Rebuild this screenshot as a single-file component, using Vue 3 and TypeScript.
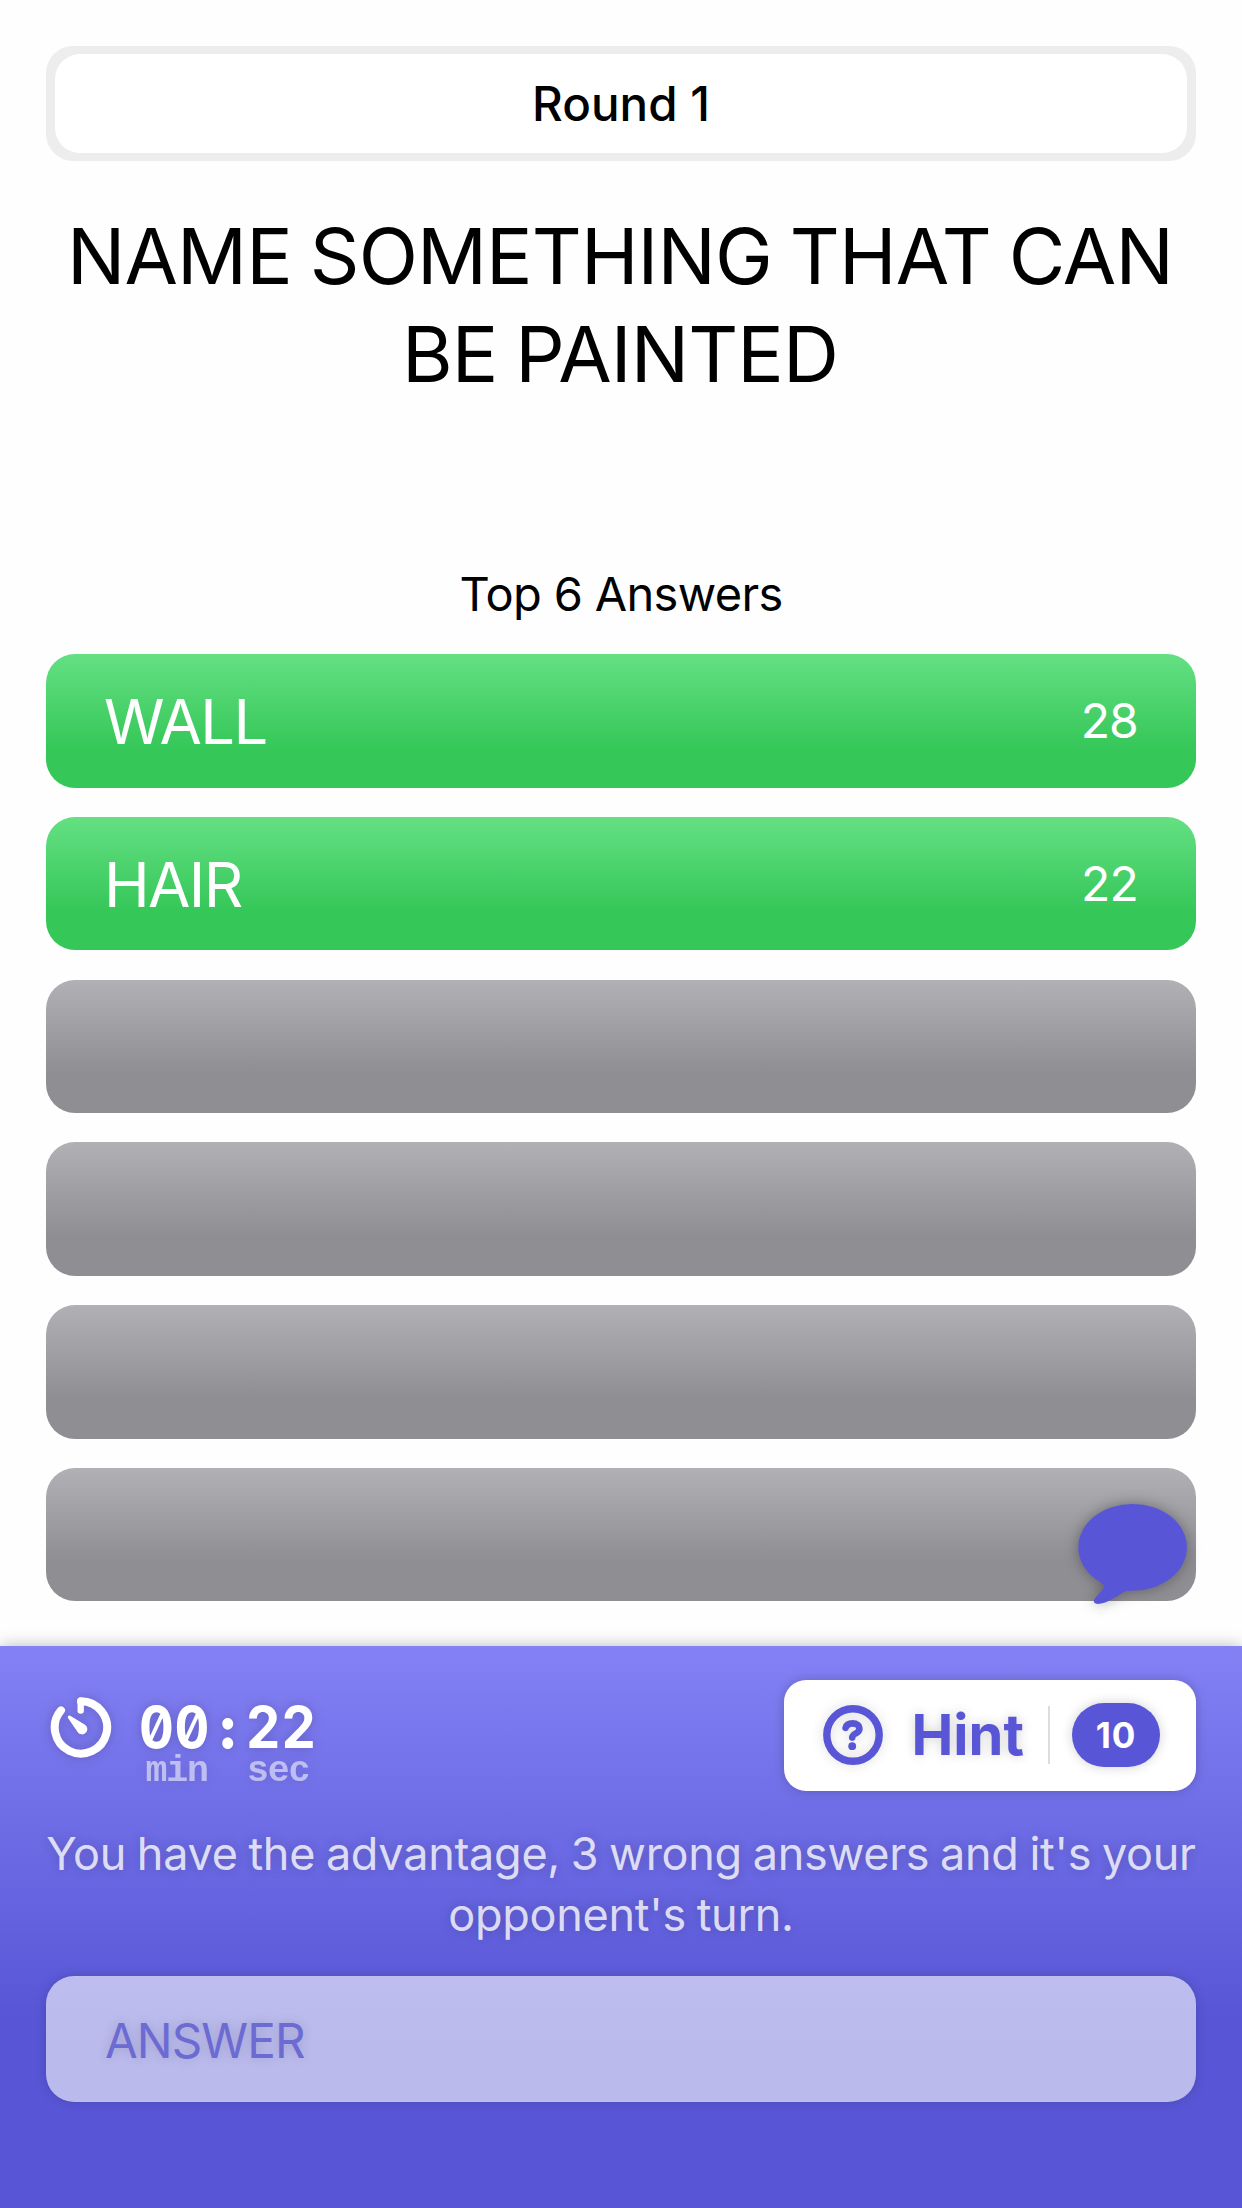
<script setup lang="ts">
interface Answer {
  text: string
  points: number | null
}

const answers: Answer[] = [
  { text: 'WALL', points: 28 },
  { text: 'HAIR', points: 22 },
  { text: '', points: null },
  { text: '', points: null },
  { text: '', points: null },
  { text: '', points: null },
]
</script>

<template>
  <div class="screen">
    <header class="round"><div class="round-inner">Round 1</div></header>
    <h1 class="question">NAME SOMETHING THAT CAN<br />BE PAINTED</h1>
    <h2 class="subtitle">Top 6 Answers</h2>
    <ul class="answers">
      <li v-for="(a, i) in answers" :key="i" class="answer" :class="{ open: a.points !== null }">
        <span class="answer-text">{{ a.text }}</span>
        <span class="points">{{ a.points }}</span>
      </li>
    </ul>

    <svg class="chat" viewBox="0 0 130 130" fill="#5856d6">
      <ellipse cx="62.6" cy="57.3" rx="54.3" ry="43.4" />
      <path d="M30 92C34.4 94.8 34.8 96.8 32.6 99.4L24.6 108.8C22.8 111.6 24.4 114 28 114C36 113.6 46 107.4 53 102.6C55.4 100.9 57.4 100.7 62 100.7L44 78Z" />
    </svg>

    <section class="panel">
      <div class="controls">
        <div class="timer">
          <svg class="timer-icon" viewBox="0 0 62 62" fill="none" stroke="#fff" stroke-linecap="round" stroke-linejoin="round">
            <path d="M31 4.2A26.2 26.2 0 1 1 11 13.4" stroke-width="8" />
            <path d="M30.7 13.6V3.6" stroke-width="6.4" />
            <path d="M20.2 18.7L35 27.7A5.3 5.3 0 1 1 27.6 35L18 20.9A1.6 1.6 0 0 1 20.2 18.7Z" fill="#fff" stroke="none" />
          </svg>
          <div class="clock">
            <div class="time">00<span class="colon">:</span>22</div>
            <div class="units"><span>min</span><span>sec</span></div>
          </div>
        </div>
        <button class="hint" type="button">
          <svg class="hint-icon" viewBox="0 0 60 60" fill="none" stroke="#5856d6" stroke-linecap="round">
            <circle cx="30" cy="30" r="26.2" stroke-width="7.4" />
            <path d="M22.6 22.8C23.5 19.6 26.2 18.4 29.6 18.4C33.6 18.4 36.4 20.6 36.4 24C36.4 28.6 29.2 28.4 29.2 32.6" stroke-width="6.6" />
            <circle cx="29.2" cy="41.2" r="3.9" fill="#5856d6" stroke="none" />
          </svg>
          <span class="hint-label">Hint</span>
          <span class="divider"></span>
          <span class="cost">10</span>
        </button>
      </div>
      <p class="message">You have the advantage, 3 wrong answers and it's your<br />opponent's turn.</p>
      <div class="field"><span>ANSWER</span></div>
    </section>
  </div>
</template>

<style>
body {
  background: #fefefe;
}
</style>

<style scoped>
.screen {
  position: relative;
  display: flex;
  flex-direction: column;
  box-sizing: border-box;
  width: 1242px;
  height: 2208px;
  padding-top: 46px;
  overflow: hidden;
  background: #fefefe;
  color: #000;
  font-family: Inter, sans-serif;
}
.round {
  height: 115px;
  margin: 0 46px;
  padding: 8px 9px;
  box-sizing: border-box;
  border-radius: 27px;
  background: #ededed;
}
.round-inner {
  display: flex;
  align-items: center;
  justify-content: center;
  height: 99px;
  padding-bottom: 1px;
  box-sizing: border-box;
  border-radius: 25px;
  background: #fff;
  font-size: 47.5px;
  font-weight: 500;
  letter-spacing: 0.05px;
}
.question {
  margin: 46px 0 0;
  padding-right: 2px;
  font-size: 77.5px;
  font-weight: 400;
  line-height: 98px;
  letter-spacing: -0.9px;
  word-spacing: -3px;
  text-align: center;
  white-space: nowrap;
}
.subtitle {
  margin: 163px 0 32px;
  font-size: 47px;
  font-weight: 400;
  line-height: 56px;
  letter-spacing: -0.66px;
  text-align: center;
}
.answers {
  display: flex;
  flex-direction: column;
  gap: 29.25px;
  margin: 0 46px;
  padding: 0;
  list-style: none;
}
.answer {
  display: flex;
  align-items: center;
  justify-content: space-between;
  box-sizing: border-box;
  height: 133.5px;
  padding: 0 58px;
  border-radius: 29px;
  background: linear-gradient(#b0b0b5, #8e8e93 70%);
  color: #fff;
}
.answer.open {
  background: linear-gradient(#64e083, #36c759 70%);
}
.answer-text {
  padding-top: 1px;
  font-size: 61.5px;
  letter-spacing: -1.64px;
}
.points {
  font-size: 48px;
  letter-spacing: -0.8px;
}
.chat {
  position: absolute;
  left: 1070px;
  top: 1490px;
  width: 130px;
  height: 130px;
  filter: drop-shadow(0 0 7px rgba(0, 0, 0, 0.32));
}
.panel {
  height: 562px;
  margin-top: auto;
  padding: 34px 46px 0;
  box-sizing: border-box;
  background: linear-gradient(#8381f4, #5856d6 66%);
  box-shadow: 0 0 15px rgba(0, 0, 0, 0.28);
  color: #fff;
}
.controls {
  display: flex;
  justify-content: space-between;
  height: 110px;
}
.timer {
  display: flex;
  align-items: flex-start;
  filter: drop-shadow(0 0 6px rgba(0, 0, 0, 0.18));
}
.timer-icon {
  width: 62px;
  height: 62px;
  margin: 17px 0 0 4px;
}
.clock {
  margin: 18px 0 0 26.5px;
}
.time {
  transform: scaleX(0.93);
  transform-origin: 0 0;
  font-size: 58px;
  font-weight: 700;
  line-height: 58px;
  letter-spacing: 0.7px;
  font-feature-settings: 'tnum', 'zero';
  white-space: nowrap;
}
.colon {
  display: inline-block;
  width: 38.3px;
  font-weight: 900;
  letter-spacing: 0;
  text-align: center;
}
.units {
  display: flex;
  gap: 39px;
  margin: 3px 0 0 7px;
  color: rgba(255, 255, 255, 0.55);
  font: 700 36.5px/26px 'Liberation Mono', monospace;
  letter-spacing: -1.1px;
}
.hint {
  display: flex;
  align-items: center;
  box-sizing: border-box;
  width: 412.5px;
  height: 110.5px;
  padding: 0 0 0 39.5px;
  border: 0;
  border-radius: 22px;
  background: #fff;
  box-shadow: 0 0 12px rgba(0, 0, 0, 0.2);
  color: #5856d6;
  font-family: inherit;
}
.hint-icon {
  width: 60px;
  height: 60px;
  filter: drop-shadow(0 0 6px rgba(0, 0, 0, 0.14));
}
.hint-label {
  margin-left: 28.5px;
  font-size: 56px;
  font-weight: 700;
  text-shadow: 0 0 12px rgba(0, 0, 0, 0.18);
}
.divider {
  width: 2px;
  height: 58px;
  margin: 0 22px 0 24px;
  background: #dcdcde;
}
.cost {
  display: flex;
  align-items: center;
  justify-content: center;
  width: 88.5px;
  height: 64px;
  border-radius: 32px;
  background: #5856d6;
  box-shadow: 0 0 12px rgba(0, 0, 0, 0.18);
  color: #fff;
  font-size: 35px;
  font-weight: 700;
  letter-spacing: 1px;
}
.message {
  margin: 33px -10px 0;
  color: rgba(255, 255, 255, 0.8);
  font-size: 45px;
  line-height: 61px;
  letter-spacing: -0.28px;
  word-spacing: -1.6px;
  text-align: center;
  text-shadow: 0 0 12px rgba(0, 0, 0, 0.2);
  white-space: nowrap;
}
.field {
  display: flex;
  align-items: center;
  box-sizing: border-box;
  height: 126px;
  margin-top: 31px;
  padding: 3px 0 0 59px;
  border-radius: 28px;
  background: linear-gradient(#bdbdef, #babaed 50%);
  box-shadow: 0 0 12px rgba(0, 0, 0, 0.16);
  color: #6c6ad3;
  font-size: 47.5px;
  letter-spacing: -0.9px;
  text-shadow: 0 0 12px rgba(0, 0, 0, 0.16);
}
</style>
